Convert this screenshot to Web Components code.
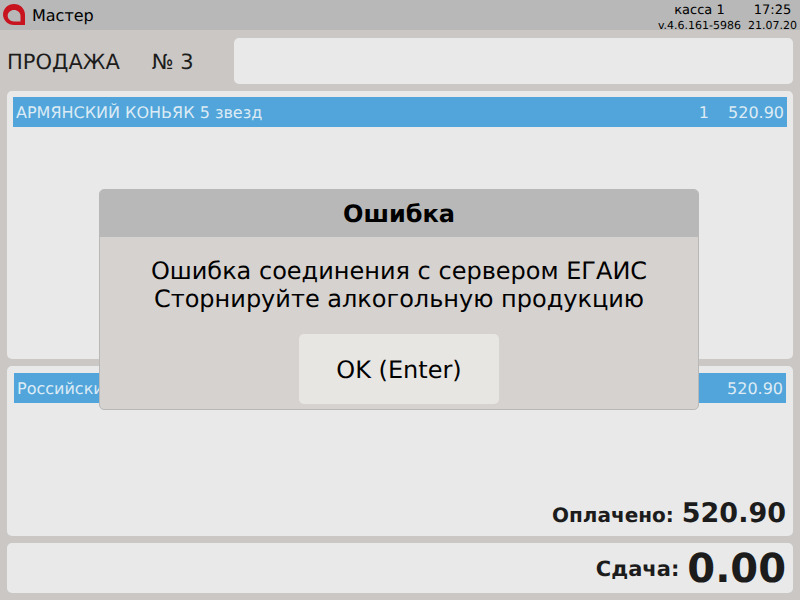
<!DOCTYPE html>
<html><head><meta charset="utf-8">
<style>
html,body{margin:0;padding:0;width:800px;height:600px;overflow:hidden;background:#cbc7c4;font-family:"DejaVu Sans",sans-serif}
</style></head><body>
<pos-screen>
  <top-bar slot="bar"></top-bar>
  <sale-head slot="head"></sale-head>
  <item-list slot="items"><list-row name="АРМЯНСКИЙ КОНЬЯК 5 звезд" qty="1" sum="520.90"></list-row></item-list>
  <pay-panel slot="pay"></pay-panel>
  <change-panel slot="change"></change-panel>
  <error-dialog slot="dialog" title-text="Ошибка" button="OK (Enter)"><div>Ошибка соединения с сервером ЕГАИС</div><div>Сторнируйте алкогольную продукцию</div></error-dialog>
</pos-screen>
<script>
function def(name,html,init){customElements.define(name,class extends HTMLElement{constructor(){super();this.attachShadow({mode:"open"}).innerHTML=html;}connectedCallback(){if(init)init(this,this.shadowRoot);}});}
def("pos-screen",`<style>:host{display:block;position:relative;width:800px;height:600px;color:#1c1c1c;text-rendering:geometricPrecision}
.main{display:flex;flex-direction:column;gap:7px;padding:8px 7px 7px;height:562px}</style>
<slot name="bar"></slot><div class="main"><slot name="head"></slot><slot name="items"></slot><slot name="pay"></slot><slot name="change"></slot></div><slot name="dialog"></slot>`);
def("top-bar",`<style>:host{display:flex;align-items:center;height:30px;background:#b8b8b8;color:#000;position:relative}
svg{margin-left:3px;width:22px;height:21px;flex:none;margin-bottom:1px}
.t{margin-left:7px;font-size:16px}
.r{margin-left:auto;display:grid;grid-template-columns:auto auto;font-size:11px;line-height:16px;text-align:right;padding-right:3px;padding-top:7px}
.k{font-size:13px;text-align:center;line-height:15px}.c{font-size:13px;text-align:center;line-height:15px;padding-left:7px}.d{padding-left:7px}</style>
<svg viewBox="0 0 22 21"><path fill="#c8141f" fill-rule="evenodd" d="M11 0C4.900 0 0 4.700 0 10.500 0 16.300 4.900 21 11 21H22V10.500C22 4.700 17.100 0 11 0ZM11 6C14.500 6 17.500 8.500 17.500 11.800V17.500H11C7.500 17.500 4.700 15 4.700 11.800 4.700 8.500 7.500 6 11 6Z"/></svg>
<span class="t">Мастер</span>
<div class="r"><span class="k">касса 1</span><span class="c">17:25</span><span>v.4.6.161-5986</span><span class="d">21.07.20</span></div>`);
def("sale-head",`<style>:host{display:flex;height:46px;flex:none}
.l{width:227px;display:flex;align-items:center;font-size:21px;white-space:pre;padding-top:1px;box-sizing:border-box}.n{margin-left:32px}
.b{flex:1;background:#e9e9e9;border-radius:5px}</style><div class="l"><span>ПРОДАЖА</span><span class="n">№ 3</span></div><div class="b"></div>`);
def("item-list",`<style>:host{display:block;height:268px;flex:none;background:#e9e9e9;border-radius:5px;padding:6px;box-sizing:border-box}</style><slot></slot>`);
def("list-row",`<style>:host{display:flex;align-items:center;height:30px;background:#52a5da;color:#dcebf5;font-size:16px;padding:0 3px;white-space:nowrap}
.q{margin-left:auto}.s{margin-left:19px}</style><span id="n"></span><span class="q" id="q"></span><span class="s" id="s"></span>`,(h,r)=>{r.getElementById("n").textContent=h.getAttribute("name");r.getElementById("q").textContent=h.getAttribute("qty")||"";r.getElementById("s").textContent=h.getAttribute("sum");});
def("pay-panel",`<style>:host{display:flex;flex-direction:column;height:170px;flex:none;background:#e9e9e9;border-radius:5px;box-sizing:border-box;padding:7px}
.row{display:flex;align-items:center;height:30px;background:#52a5da;color:#dcebf5;font-size:16px;padding:0 3px;justify-content:space-between}
.foot{margin-top:auto;display:flex;justify-content:flex-end;align-items:baseline;gap:8px;font-weight:bold;color:#1c1c1c}
.a{font-size:20px}.b{font-size:27px}</style><div class="row"><span>Российский</span><span>520.90</span></div><div class="foot"><span class="a">Оплачено:</span><span class="b">520.90</span></div>`);
def("change-panel",`<style>:host{display:flex;justify-content:flex-end;align-items:center;height:50px;flex:none;background:#e9e9e9;border-radius:5px;padding:2px 7px 0;box-sizing:border-box;gap:8px;font-weight:bold}
.a{font-size:21px}.b{font-size:40px}</style><span class="a">Сдача:</span><span class="b">0.00</span>`);
def("error-dialog",`<style>:host{position:absolute;left:99px;top:189px;width:600px;height:221px;box-sizing:border-box;border:1px solid #b8b8b8;border-radius:5px;background:#d6d2cf;display:flex;flex-direction:column;align-items:center;color:#000;overflow:hidden}
.h{align-self:stretch;height:47px;flex:none;background:#b8b8b8;display:flex;align-items:center;justify-content:center;font-size:24px;font-weight:bold}
.m{margin-top:20px;font-size:24px;line-height:28px;text-align:center}
button{all:unset;margin-top:21px;width:200px;height:70px;background:#e8e6e3;border-radius:5px;display:flex;align-items:center;justify-content:center;font-size:24px;padding-top:2px;box-sizing:border-box}</style>
<div class="h" id="t"></div><div class="m"><slot></slot></div><button id="b"></button>`,(h,r)=>{r.getElementById("t").textContent=h.getAttribute("title-text");r.getElementById("b").textContent=h.getAttribute("button");});
</script></body></html>
